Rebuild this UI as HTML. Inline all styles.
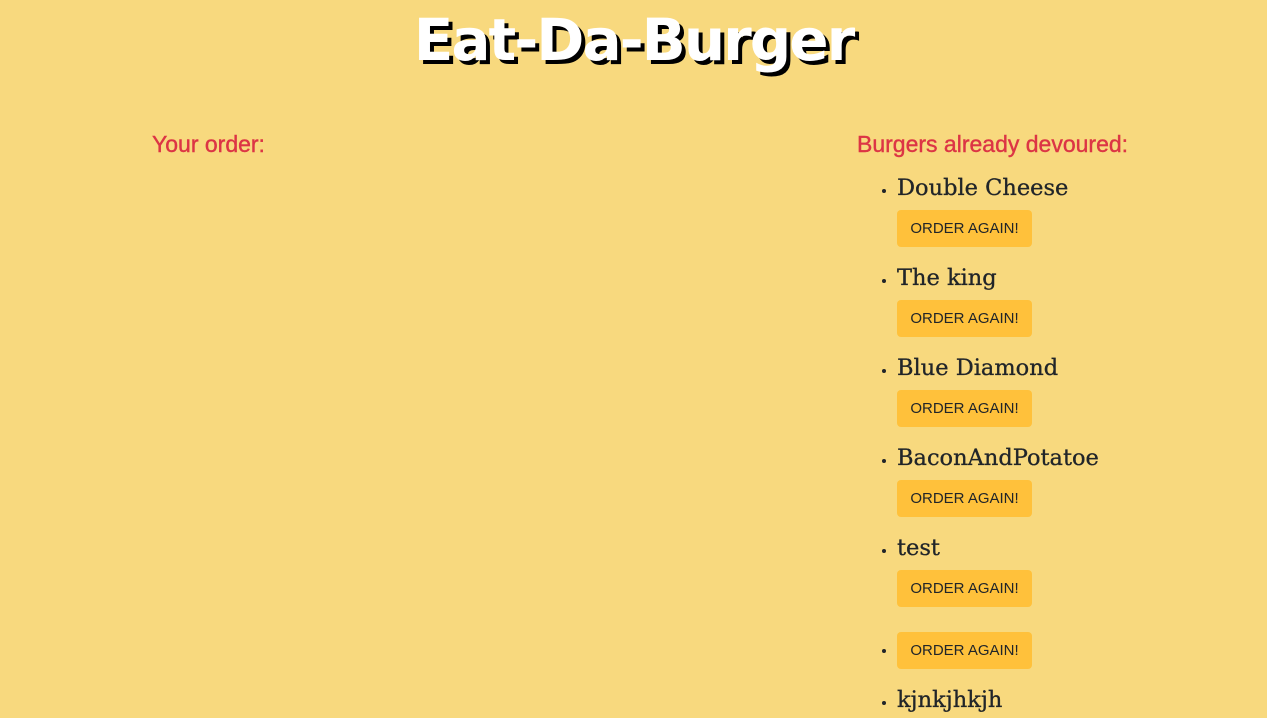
<!DOCTYPE html>
<html style="height:718px;overflow:hidden"><head><meta charset="utf-8"><style>
body{margin:0;background:#f8d97e;width:1267px;height:718px;overflow:hidden;font-family:"Liberation Sans",sans-serif;position:relative}
h1{position:absolute;top:2px;left:0;width:1267px;text-align:center;margin:0;font-size:58px;line-height:76px;color:#fff;font-family:"DejaVu Sans",sans-serif;font-weight:bold;letter-spacing:-2px;text-shadow:4px 4px 0 #000}
.h{position:absolute;top:131px;color:#dc3545;font-size:23px;-webkit-text-stroke:0.4px #dc3545}
ul{position:absolute;left:857px;top:170px;margin:0;padding:0 0 0 40px;color:#212529;height:548px;overflow:hidden}
li{height:90px;position:relative}
.n{font-family:"DejaVu Serif",serif;font-size:22.5px;line-height:36px;display:block;-webkit-text-stroke:0.3px #212529}
.b{position:absolute;left:0;top:40px;width:135px;height:37px;background:#ffc13b;border-radius:4px;font-size:15px;line-height:37px;text-align:center;color:#212529}
.ib{display:inline-block;width:135px;height:37px;background:#ffc13b;border-radius:4px;font-size:15px;line-height:37px;text-align:center;color:#212529}
</style></head><body>
<h1>Eat-Da-Burger</h1>
<div class="h" style="left:152px">Your order:</div>
<div class="h" style="left:857px">Burgers already devoured:</div>
<ul>
<li><span class="n">Double Cheese</span><span class="b">ORDER AGAIN!</span></li>
<li><span class="n">The king</span><span class="b">ORDER AGAIN!</span></li>
<li><span class="n">Blue Diamond</span><span class="b">ORDER AGAIN!</span></li>
<li><span class="n">BaconAndPotatoe</span><span class="b">ORDER AGAIN!</span></li>
<li><span class="n">test</span><span class="b">ORDER AGAIN!</span></li>
<li style="height:50px;padding-top:12px"><span class="ib">ORDER AGAIN!</span></li>
<li><span class="n">kjnkjhkjh</span></li>
</ul>
</body></html>
